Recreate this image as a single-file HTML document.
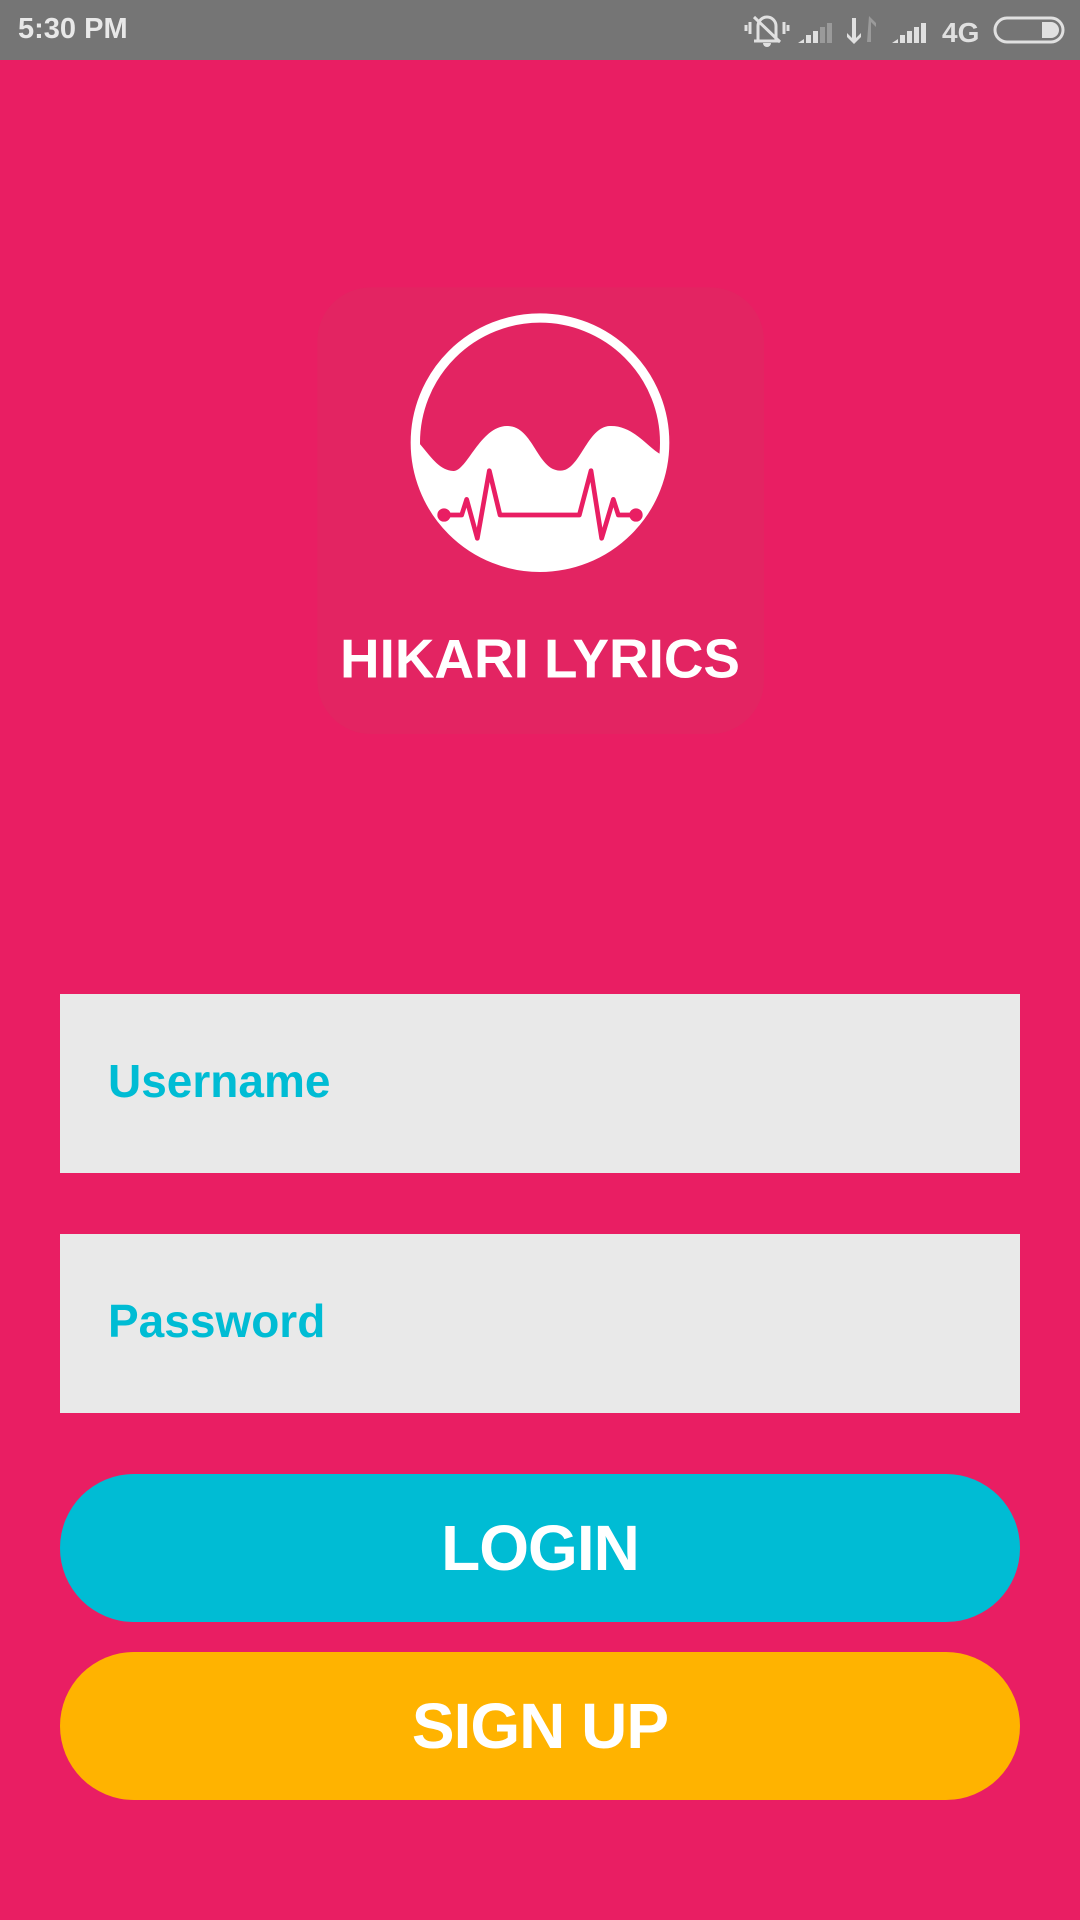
<!DOCTYPE html>
<html><head><meta charset="utf-8">
<style>
*{margin:0;padding:0;box-sizing:border-box}
body{width:1080px;height:1920px;background:#e91e63;position:relative;overflow:hidden;font-family:"Liberation Sans",sans-serif}
.sb{position:absolute;left:0;top:0;width:1080px;height:60px;background:#757575}
.time{position:absolute;left:18px;top:13px;font-size:29px;font-weight:bold;color:#e8e8e8}
.field{position:absolute;left:60px;width:960px;background:#e9e9e9}
.field span{position:absolute;font-size:46px;font-weight:bold;color:#00bcd4;left:48px}
.btn{position:absolute;left:60px;width:960px;height:148px;border-radius:74px;color:#fff;font-weight:bold;font-size:64px;text-align:center;line-height:148px;letter-spacing:-1px}
</style></head><body>
<div class="sb">
<div class="time">5:30 PM</div>
<svg style="position:absolute;left:700px;top:0" width="380" height="60" viewBox="0 0 380 60" fill="#e0e0e0">
 <g stroke="#e0e0e0" stroke-width="3" fill="none">
  <path d="M58 40 V26 a9 9 0 0 1 18 0 V40 M54 41 H80 M54 17 L80 42"/>
  <path d="M50 22 v12 M46 25 v6 M84 22 v12 M88 25 v6"/>
 </g>
 <path d="M63 43 h8 a4 4 0 0 1 -8 0z"/>
 <path d="M98 43 h6 v-4z M106 43 h5 v-8 h-5z M113 43 h5 v-12 h-5z"/>
 <path d="M120 43 h5 v-16 h-5z M127 43 h5 v-20 h-5z" fill="#9a9a9a"/>
 <path d="M152 18 h4 v20 l5 -5 v4 l-7 7 l-7 -7 v-4 l5 5z"/>
 <path d="M167 42 h4 v-20 l5 5 v-4 l-7 -7z" fill="#9a9a9a"/>
 <path d="M192 43 h6 v-4z M200 43 h5 v-8 h-5z M207 43 h5 v-12 h-5z M214 43 h5 v-16 h-5z M221 43 h5 v-20 h-5z"/>
 <text x="242" y="42" font-family="Liberation Sans" font-weight="bold" font-size="28" fill="#e0e0e0">4G</text>
 <rect x="295" y="18" width="68" height="24" rx="12" fill="none" stroke="#e0e0e0" stroke-width="3"/>
 <path d="M342 22 h9 a8 8 0 0 1 0 16 h-9z"/>
</svg>
</div>

<svg style="position:absolute;left:300px;top:270px" width="480" height="480" viewBox="0 0 1440 1440">
 <defs><clipPath id="c"><circle cx="720" cy="518" r="376"/></clipPath></defs>
 <rect x="52" y="52" width="1340" height="1340" rx="160" fill="#e32462"/>
 <g clip-path="url(#c)">
  <path d="M300 470 L358 520 C400 570 420 600 460 603 C500 605 540 470 620 468 C700 466 710 600 780 602 C840 605 860 470 930 468 C1000 466 1040 530 1085 555 L1200 600 L1200 1000 L300 1000 Z" fill="#fff"/>
 </g>
 <circle cx="720" cy="518" r="374" fill="none" stroke="#fff" stroke-width="28"/>
 <g fill="none" stroke="#e91e63" stroke-width="14" stroke-linejoin="round" stroke-linecap="round">
  <path d="M430 735 H485 L500 688 L532 805 L568 602 L600 735 H838 L873 602 L905 805 L940 688 L955 735 H1010"/>
 </g>
 <circle cx="432" cy="735" r="20" fill="#e91e63"/>
 <circle cx="1008" cy="735" r="20" fill="#e91e63"/>
 <text x="720" y="1222" text-anchor="middle" font-family="Liberation Sans" font-weight="bold" font-size="165" fill="#fff" textLength="1200" lengthAdjust="spacingAndGlyphs">HIKARI LYRICS</text>
</svg>

<div class="field" style="top:994px;height:179px"><span style="top:60px">Username</span></div>
<div class="field" style="top:1234px;height:179px"><span style="top:60px">Password</span></div>
<div class="btn" style="top:1474px;background:#00bcd4">LOGIN</div>
<div class="btn" style="top:1652px;background:#ffb300">SIGN UP</div>
</body></html>
